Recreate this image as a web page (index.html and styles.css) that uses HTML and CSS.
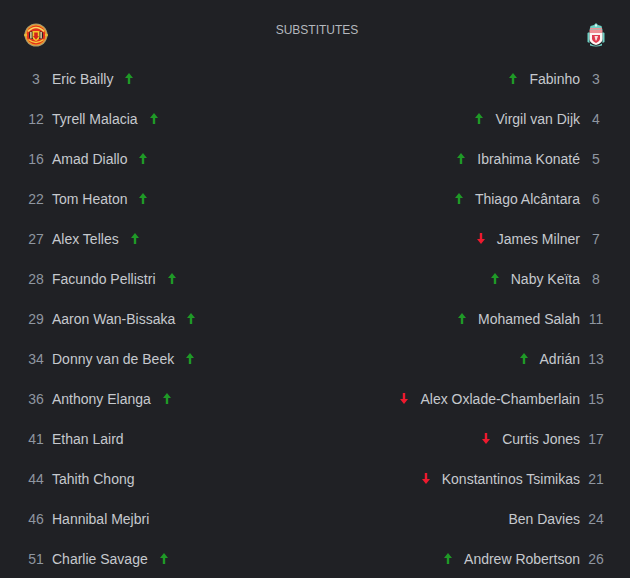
FILE: index.html
```html
<!DOCTYPE html>
<html lang="en">
<head>
	<meta charset="UTF-8"/>
	<title>Substitutes</title>
	<link rel="stylesheet" href="styles.css">
</head>
<body>
	<svg width="0" height="0" class="defs">
		<symbol id="up" viewBox="0 0 8 11"><path d="M4 0 L8 5 H5.2 V11 H2.8 V5 H0 Z"/></symbol>
		<symbol id="down" viewBox="0 0 8 11"><path d="M4 11 L8 6 H5.2 V0 H2.8 V6 H0 Z"/></symbol>
	</svg>
	<!-- Header with the two crests -->
	<div class="header">
		<svg class="crest" width="24" height="24" viewBox="0 0 24 24">
			<circle cx="12" cy="12" r="11.5" fill="#a89a70"/>
			<circle cx="12" cy="12" r="10.6" fill="#ee9a26"/>
			<circle cx="12" cy="12" r="9.4" fill="#e0301c"/>
			<path d="M4 8.5 Q12 0.5 20 8.5" stroke="#f8d860" stroke-width="1.4" fill="none"/>
			<path d="M4.5 16.5 Q12 22.5 19.5 16.5" stroke="#f8c93f" stroke-width="1.6" fill="none"/>
			<rect x="5" y="8.5" width="14" height="7.5" rx="2" fill="#2a2020"/>
			<rect x="6.2" y="9" width="1.4" height="6.5" fill="#f0dca8"/>
			<rect x="16.4" y="9" width="1.4" height="6.5" fill="#f0dca8"/>
			<path d="M8.5 8 H15.5 V14 Q15.5 16.5 12 18 Q8.5 16.5 8.5 14 Z" fill="#f5c52f"/>
			<path d="M10.2 9.5 H13.8 V13 H15 L12 16.8 L9 13 H10.2 Z" fill="#d4221a"/>
			<circle cx="1.6" cy="12" r="1.6" fill="#e8b93a"/>
			<circle cx="22.4" cy="12" r="1.6" fill="#e8b93a"/>
		</svg>
		<span class="title">SUBSTITUTES</span>
		<svg class="crest" width="18" height="24" viewBox="0 0 18 24">
			<path d="M9 0 L11 2 L14.5 3 L15.5 7 H2.5 L3.5 3 L7 2 Z" fill="#6fd0c4"/>
			<rect x="8" y="1.5" width="2" height="2" fill="#d8f2ee"/>
			<rect x="3" y="5" width="12" height="1.5" fill="#ee8f94"/>
			<rect x="2.5" y="7" width="13" height="3" fill="#ee8f94"/>
			<path d="M0.5 10 L2.5 9 V20 L0.5 19 Z" fill="#6fd0c4"/>
			<path d="M17.5 10 L15.5 9 V20 L17.5 19 Z" fill="#6fd0c4"/>
			<path d="M2.5 10 H15.5 V16 Q15.5 20 9 22 Q2.5 20 2.5 16 Z" fill="#fdf4f2"/>
			<path d="M5 12 H13 V15.5 Q13 18 9 20 Q5 18 5 15.5 Z" fill="#de3a4e"/>
			<path d="M7.5 13 H11 L9.5 17.5 H8.5 Z" fill="#fbdcdc"/>
			<path d="M3 20.5 Q9 25 15 20.5 V22.5 Q9 24.5 3 22.5 Z" fill="#6fd0c4"/>
		</svg>
	</div>
	<div class="lineups">
		<!-- Home team -->
		<ul class="team home">
			<li><span class="num">3</span><span class="name">Eric Bailly</span><svg class="arrow in"><use href="#up"/></svg></li>
			<li><span class="num">12</span><span class="name">Tyrell Malacia</span><svg class="arrow in"><use href="#up"/></svg></li>
			<li><span class="num">16</span><span class="name">Amad Diallo</span><svg class="arrow in"><use href="#up"/></svg></li>
			<li><span class="num">22</span><span class="name">Tom Heaton</span><svg class="arrow in"><use href="#up"/></svg></li>
			<li><span class="num">27</span><span class="name">Alex Telles</span><svg class="arrow in"><use href="#up"/></svg></li>
			<li><span class="num">28</span><span class="name">Facundo Pellistri</span><svg class="arrow in"><use href="#up"/></svg></li>
			<li><span class="num">29</span><span class="name">Aaron Wan-Bissaka</span><svg class="arrow in"><use href="#up"/></svg></li>
			<li><span class="num">34</span><span class="name">Donny van de Beek</span><svg class="arrow in"><use href="#up"/></svg></li>
			<li><span class="num">36</span><span class="name">Anthony Elanga</span><svg class="arrow in"><use href="#up"/></svg></li>
			<li><span class="num">41</span><span class="name">Ethan Laird</span></li>
			<li><span class="num">44</span><span class="name">Tahith Chong</span></li>
			<li><span class="num">46</span><span class="name">Hannibal Mejbri</span></li>
			<li><span class="num">51</span><span class="name">Charlie Savage</span><svg class="arrow in"><use href="#up"/></svg></li>
		</ul>
		<!-- Away team -->
		<ul class="team away">
			<li><svg class="arrow in"><use href="#up"/></svg><span class="name">Fabinho</span><span class="num">3</span></li>
			<li><svg class="arrow in"><use href="#up"/></svg><span class="name">Virgil van Dijk</span><span class="num">4</span></li>
			<li><svg class="arrow in"><use href="#up"/></svg><span class="name">Ibrahima Konaté</span><span class="num">5</span></li>
			<li><svg class="arrow in"><use href="#up"/></svg><span class="name">Thiago Alcântara</span><span class="num">6</span></li>
			<li><svg class="arrow out"><use href="#down"/></svg><span class="name">James Milner</span><span class="num">7</span></li>
			<li><svg class="arrow in"><use href="#up"/></svg><span class="name">Naby Keïta</span><span class="num">8</span></li>
			<li><svg class="arrow in"><use href="#up"/></svg><span class="name">Mohamed Salah</span><span class="num">11</span></li>
			<li><svg class="arrow in"><use href="#up"/></svg><span class="name">Adrián</span><span class="num">13</span></li>
			<li><svg class="arrow out"><use href="#down"/></svg><span class="name">Alex Oxlade-Chamberlain</span><span class="num">15</span></li>
			<li><svg class="arrow out"><use href="#down"/></svg><span class="name">Curtis Jones</span><span class="num">17</span></li>
			<li><svg class="arrow out"><use href="#down"/></svg><span class="name">Konstantinos Tsimikas</span><span class="num">21</span></li>
			<li><span class="name">Ben Davies</span><span class="num">24</span></li>
			<li><svg class="arrow in"><use href="#up"/></svg><span class="name">Andrew Robertson</span><span class="num">26</span></li>
		</ul>
	</div>
</body>
</html>
```
FILE: styles.css
```css
/* Page */
body {
	margin: 0;
	height: 578px;
	overflow: hidden;
	background-color: #202125;
	font-family: "Liberation Sans", Arial, sans-serif;
	font-size: 14px;
}
.defs {
	display: block;
	height: 0;
}
/* Header row */
.header {
	display: flex;
	align-items: center;
	justify-content: space-between;
	height: 24px;
	padding: 23px 25px 12px 24px;
}
.title {
	font-size: 12px;
	color: #b4b8be;
	margin: -11px 1px 0 0;
}
/* Two team columns */
.lineups {
	display: flex;
	justify-content: space-between;
	padding: 0 22px 0 24px;
}
.team {
	list-style: none;
	margin: 0;
	padding: 0;
}
.team li {
	display: flex;
	align-items: center;
	height: 40px;
}
.num {
	width: 24px;
	text-align: center;
	color: #8f96a0;
}
.home .num {
	margin-right: 4px;
}
.away li {
	justify-content: flex-end;
}
.away .num {
	margin-left: 4px;
}
.name {
	color: #c6c9ce;
}
/* Substitution arrows */
.arrow {
	width: 8px;
	height: 11px;
	margin-top: -1px;
}
.home .arrow {
	margin-left: 12px;
}
.away .arrow {
	margin-right: 12px;
}
.arrow.in {
	fill: #1f9a27;
}
.arrow.out {
	fill: #ee1a2e;
}
```
